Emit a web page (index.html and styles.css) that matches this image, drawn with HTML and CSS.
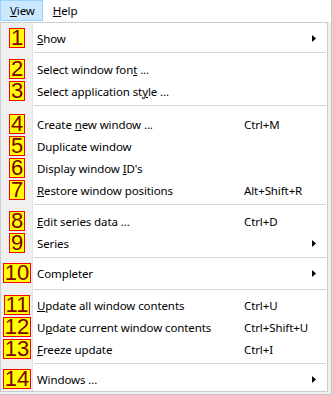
FILE: index.html
```html
<!DOCTYPE html>
<html lang="en">
  <head>
    <meta charset="UTF-8" />
    <title>View menu</title>
    <link rel="stylesheet" href="styles.css">
  </head>
  <body>
    <div class="window">
      <div class="menubar">
        <div class="menubar-item active"><u>V</u>iew</div>
        <div class="menubar-item"><u>H</u>elp</div>
      </div>

      <div class="popup">
        <div class="item">
          <div class="gutter"><span class="badge">1</span></div>
          <div class="label"><u>S</u>how</div>
          <div class="shortcut"></div>
          <div class="sub"><svg width="4" height="7" viewBox="0 0 4 7"><path d="M0 0L4 3.5L0 7z" /></svg></div>
        </div>
        <div class="sep"></div>
        <div class="item">
          <div class="gutter"><span class="badge">2</span></div>
          <div class="label">Select window fon<u>t</u> ...</div>
          <div class="shortcut"></div>
          <div class="sub"></div>
        </div>
        <div class="item">
          <div class="gutter"><span class="badge">3</span></div>
          <div class="label">Select application st<u>y</u>le ...</div>
          <div class="shortcut"></div>
          <div class="sub"></div>
        </div>
        <div class="sep tall"></div>
        <div class="item">
          <div class="gutter"><span class="badge">4</span></div>
          <div class="label">Create <u>n</u>ew window ...</div>
          <div class="shortcut">Ctrl+M</div>
          <div class="sub"></div>
        </div>
        <div class="item">
          <div class="gutter"><span class="badge">5</span></div>
          <div class="label">Duplicate window</div>
          <div class="shortcut"></div>
          <div class="sub"></div>
        </div>
        <div class="item">
          <div class="gutter"><span class="badge">6</span></div>
          <div class="label">Display window <u>I</u>D's</div>
          <div class="shortcut"></div>
          <div class="sub"></div>
        </div>
        <div class="item">
          <div class="gutter"><span class="badge">7</span></div>
          <div class="label"><u>R</u>estore window positions</div>
          <div class="shortcut">Alt+Shift+R</div>
          <div class="sub"></div>
        </div>
        <div class="sep"></div>
        <div class="item">
          <div class="gutter"><span class="badge">8</span></div>
          <div class="label"><u>E</u>dit series data ...</div>
          <div class="shortcut">Ctrl+D</div>
          <div class="sub"></div>
        </div>
        <div class="item">
          <div class="gutter"><span class="badge">9</span></div>
          <div class="label">Series</div>
          <div class="shortcut"></div>
          <div class="sub"><svg width="4" height="7" viewBox="0 0 4 7"><path d="M0 0L4 3.5L0 7z" /></svg></div>
        </div>
        <div class="sep short"></div>
        <div class="item">
          <div class="gutter"><span class="badge">10</span></div>
          <div class="label">Completer</div>
          <div class="shortcut"></div>
          <div class="sub"><svg width="4" height="7" viewBox="0 0 4 7"><path d="M0 0L4 3.5L0 7z" /></svg></div>
        </div>
        <div class="sep wide"></div>
        <div class="item">
          <div class="gutter"><span class="badge">11</span></div>
          <div class="label"><u>U</u>pdate all window contents</div>
          <div class="shortcut">Ctrl+U</div>
          <div class="sub"></div>
        </div>
        <div class="item">
          <div class="gutter"><span class="badge">12</span></div>
          <div class="label">U<u>p</u>date current window contents</div>
          <div class="shortcut">Ctrl+Shift+U</div>
          <div class="sub"></div>
        </div>
        <div class="item">
          <div class="gutter"><span class="badge">13</span></div>
          <div class="label"><u>F</u>reeze update</div>
          <div class="shortcut">Ctrl+I</div>
          <div class="sub"></div>
        </div>
        <div class="sep short"></div>
        <div class="item">
          <div class="gutter"><span class="badge">14</span></div>
          <div class="label">Windows ...</div>
          <div class="shortcut"></div>
          <div class="sub"><svg width="4" height="7" viewBox="0 0 4 7"><path d="M0 0L4 3.5L0 7z" /></svg></div>
        </div>
      </div>
    </div>
  </body>
</html>
```

FILE: styles.css
```css
html,
body {
  margin: 0;
  padding: 0;
  background: #ffffff;
}

body {
  font-family: "Noto Sans", "DejaVu Sans", sans-serif;
  font-size: 11.5px;
  letter-spacing: -0.1px;
  color: #000000;
}

.window {
  width: 331px;
  height: 394px;
  background: #f0f0f0;
  border-right: 1px solid #c8c8c8;
  border-bottom: 1px solid #c8c8c8;
}

.menubar {
  display: flex;
  height: 22px;
  background: #ffffff;
}

.menubar-item {
  height: 21px;
  line-height: 19px;
  padding: 0 7px 0 9px;
  border: 1px solid transparent;
  box-sizing: border-box;
}

.menubar-item.active {
  background: #cce8ff;
  border-color: #99d1ff;
}

.popup {
  width: 328px;
  height: 370px;
  box-sizing: border-box;
  border: 1px solid #cccccc;
  padding: 4px 0 0 0;
  background: linear-gradient(to right, transparent 31px, #e3e3e3 31px, #e3e3e3 32px, #ffffff 32px);
}

.item {
  display: flex;
  align-items: center;
  height: 22px;
}

.gutter {
  width: 32px;
  display: flex;
  justify-content: center;
  flex-shrink: 0;
}

.badge {
  height: 20px;
  box-sizing: border-box;
  padding: 0 1px;
  border: 1px solid #ff0000;
  background: #ffff00;
  color: #800000;
  font-family: "Liberation Sans", Arial, sans-serif;
  font-size: 22px;
  letter-spacing: 0;
  line-height: 18px;
}

.label {
  width: 207px;
  padding-left: 4px;
  flex-shrink: 0;
  white-space: nowrap;
}

.shortcut {
  width: 67px;
  flex-shrink: 0;
  white-space: nowrap;
}

.sub {
  width: 15px;
  padding-left: 1px;
  display: flex;
  align-items: center;
}

/* separator line sits 3px below the row above */
.sep {
  height: 9px;
  margin-left: 33px;
  margin-right: 1px;
  background: linear-gradient(to bottom, transparent 3px, #d7d7d7 3px, #d7d7d7 4px, transparent 4px);
}

.sep.tall {
  height: 11px;
}

.sep.short {
  height: 8px;
}

.sep.wide {
  height: 10px;
  background: linear-gradient(to bottom, transparent 5px, #d7d7d7 5px, #d7d7d7 6px, transparent 6px);
}
```
